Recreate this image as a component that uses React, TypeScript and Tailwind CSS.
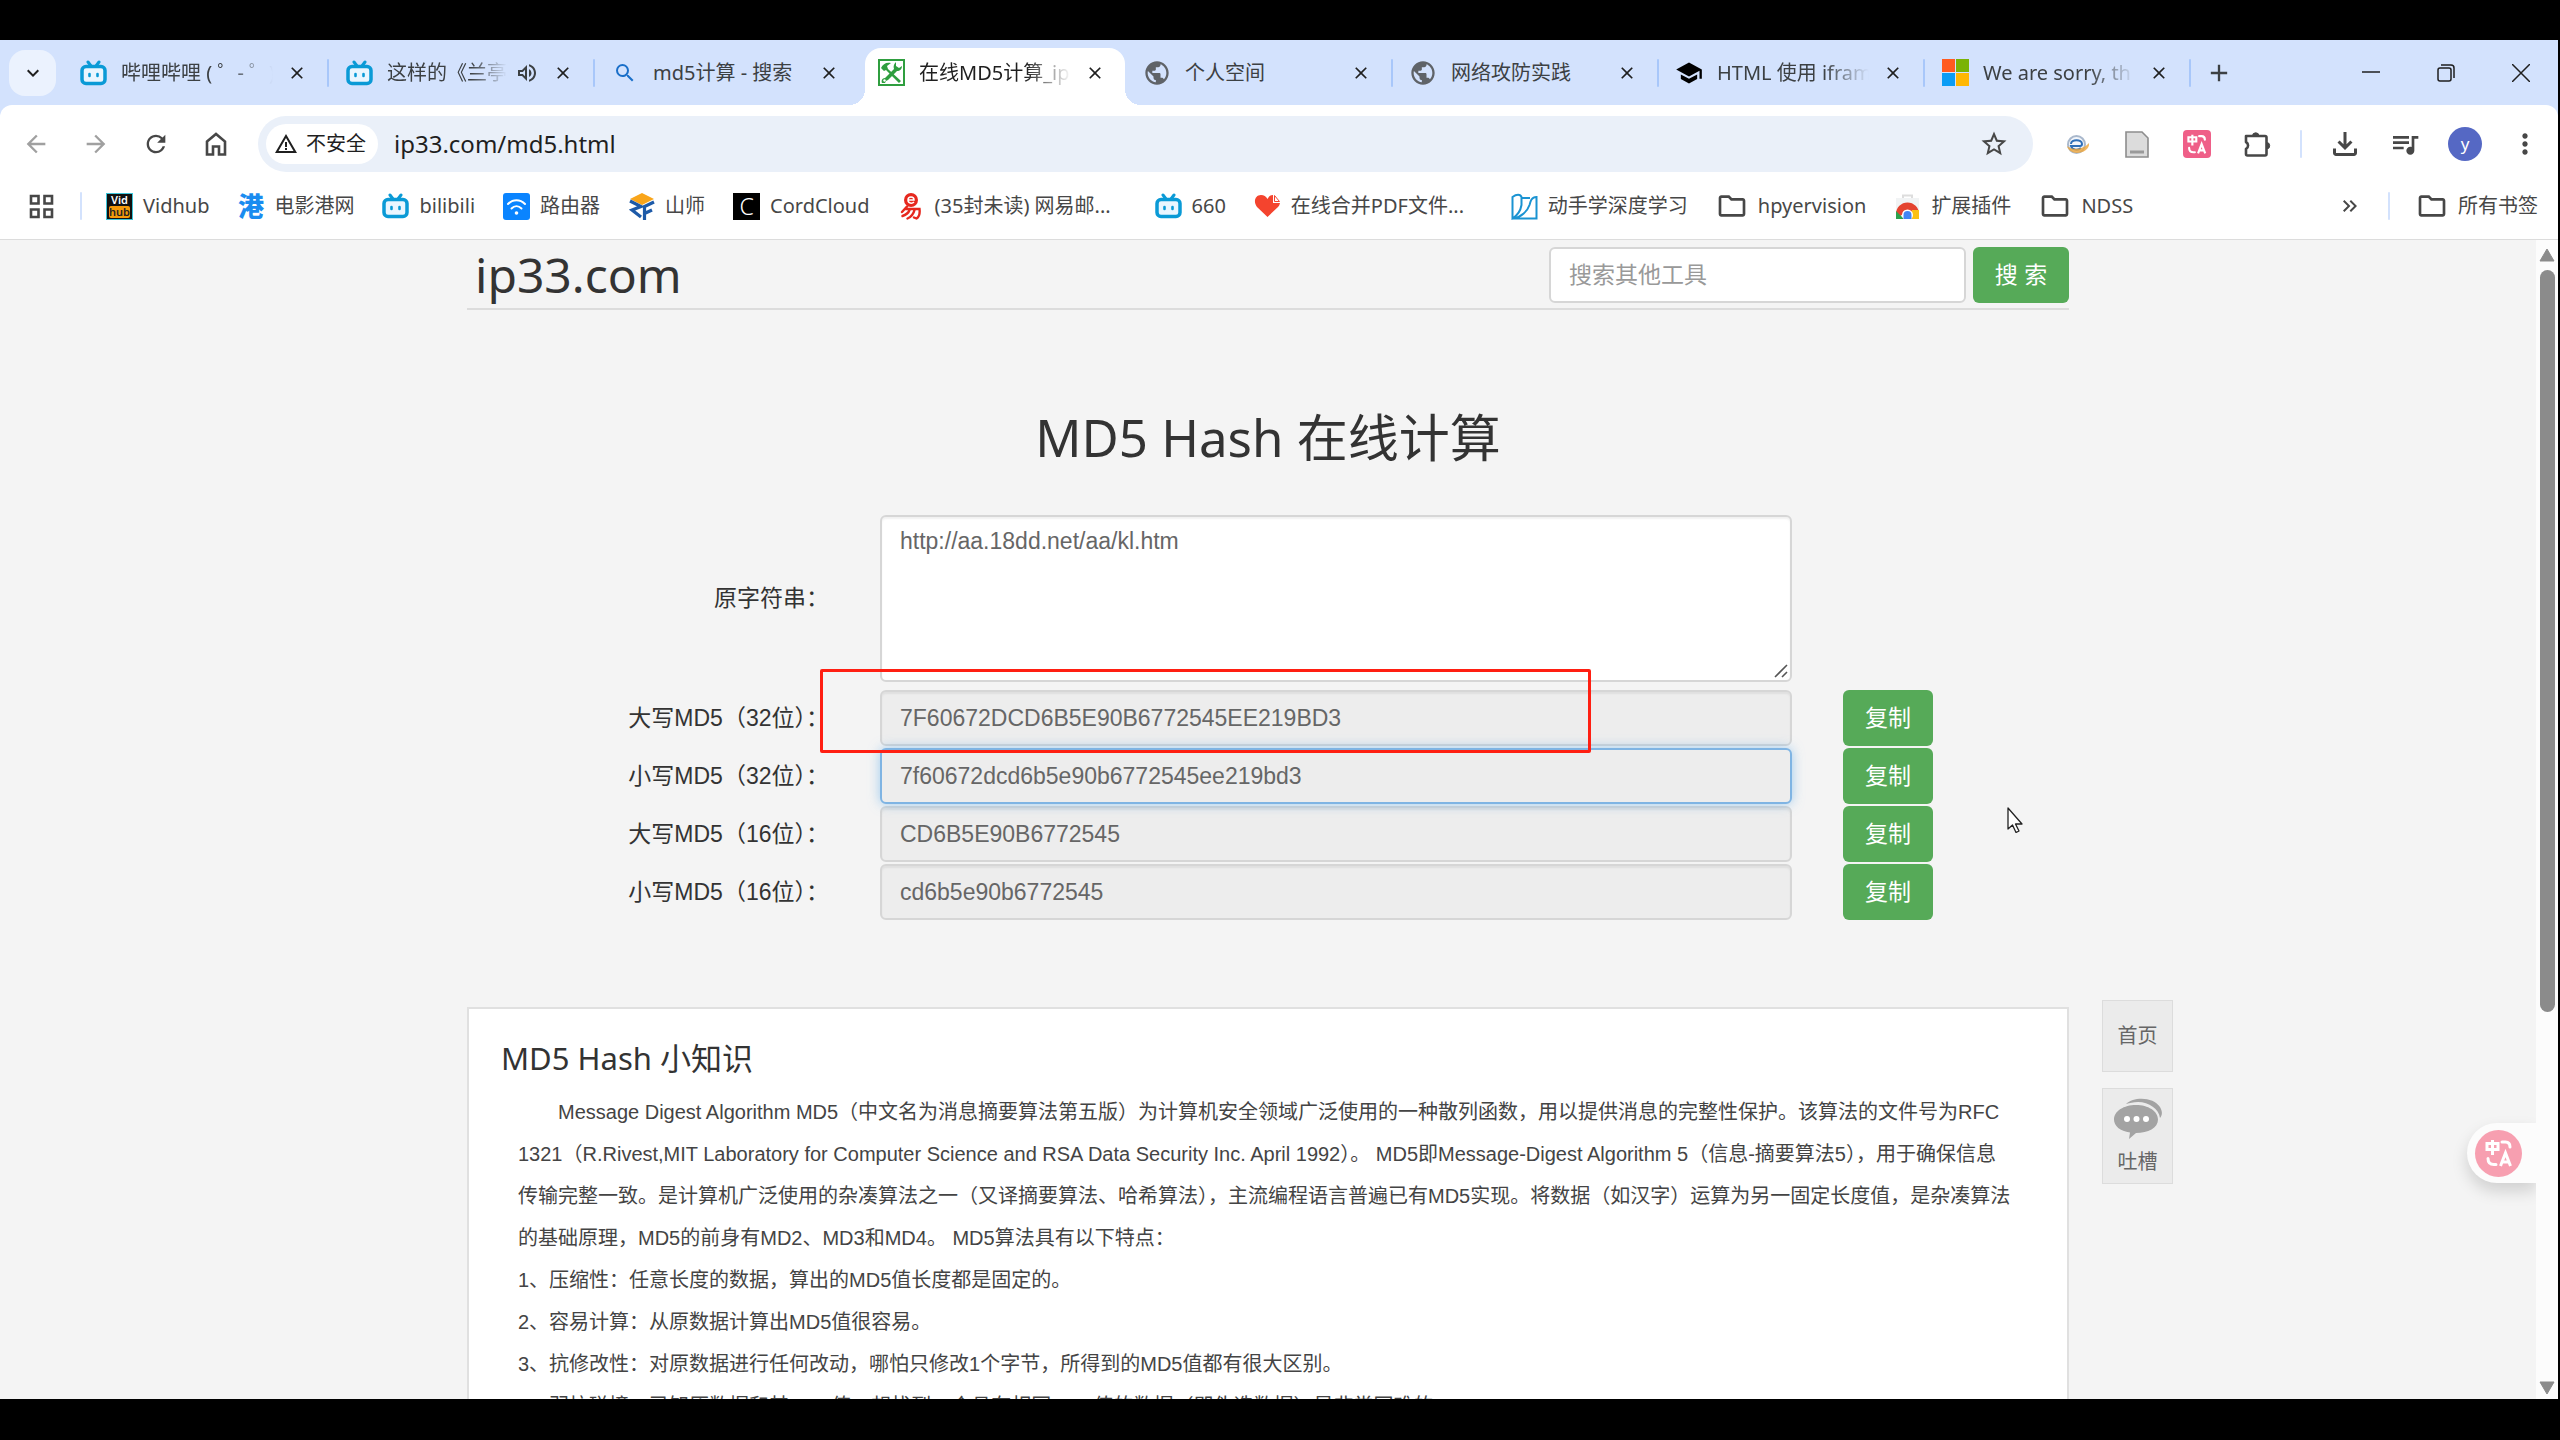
import React, { ReactNode, useState } from "react";
import clsx from "clsx";
import {
  MdArrowBack,
  MdArrowForward,
  MdRefresh,
  MdWarningAmber,
  MdStarBorder,
  MdOutlineFileDownload,
  MdQueueMusic,
  MdMoreVert,
  MdPublic,
  MdClose,
  MdAdd,
  MdSearch,
  MdKeyboardArrowDown,
  MdOutlineVolumeUp,
  MdSchool,
  MdOutlineFolder,
  MdKeyboardDoubleArrowRight,
} from "react-icons/md";

function BiliIcon() {
  return (
    <svg viewBox="0 0 27 26" className="h-[26px] w-[27px]">
      <path d="M8 2l3 4M19 2l-3 4" stroke="#0a9ad6" strokeWidth="3" strokeLinecap="round" />
      <rect x="2" y="6.5" width="23" height="17" rx="4" fill="#eaf6ff" stroke="#0a9ad6" strokeWidth="3.500" />
      <path d="M9.5 14v2M17.500 14v2" stroke="#0a9ad6" strokeWidth="2.600" strokeLinecap="round" />
    </svg>
  );
}

function ToolsIcon() {
  return (
    <svg viewBox="0 0 27 27" className="size-[27px]">
      <rect x="1" y="1" width="25" height="25" fill="#fff" stroke="#2f9e3f" strokeWidth="2" />
      <path d="M3 9c2-4 5-6 10-5l-4 3 1 3 13 12-2 2L8 11l-2 1z" fill="#2f9e3f" />
      <path d="M18 3c-2 2-3 4-2 7L7 19c-3 0-4 3-3 5h3l1-2 2-1 9-9c3 0 5-2 5-5l-3 2-3-2z" fill="#2f9e3f" />
      <circle cx="6.500" cy="21.500" r="1.200" fill="#fff" />
    </svg>
  );
}

function MicrosoftIcon() {
  return (
    <svg viewBox="0 0 27 27" className="size-[27px]">
      <path fill="#ff5a1f" d="M0 0h13v13H0z" />
      <path fill="#7ab305" d="M14 0h13v13H14z" />
      <path fill="#0a9cf5" d="M0 14h13v13H0z" />
      <path fill="#ffb703" d="M14 14h13v13H14z" />
    </svg>
  );
}

function VidhubIcon() {
  return (
    <span className="flex size-[27px] flex-col border border-[#3cc4d8] bg-[#111] px-0.5 text-center text-[11px] leading-[12px] font-semibold text-white">
      <span>Vid</span>
      <span className="rounded-xs bg-[#f59a0a] text-[#222]">hub</span>
    </span>
  );
}

function WifiIcon() {
  return (
    <svg viewBox="0 0 27 27" className="size-[27px]">
      <rect width="27" height="27" rx="3" fill="#0a84ff" />
      <g fill="none" stroke="#fff" strokeWidth="2" strokeLinecap="round">
        <path d="M5 11c5-5 12-5 17 0" />
        <path d="M8.500 15.500c3-3 7-3 10 0" />
      </g>
      <circle cx="13.500" cy="20" r="1.800" fill="#fff" />
    </svg>
  );
}

function ShanshiIcon() {
  return (
    <svg viewBox="0 0 26 27" className="h-[27px] w-[26px]">
      <path d="M13 0l12 6-12 6L1 6z" fill="#f9a51a" />
      <path d="M1 8l11 5.500-9 3.500 9 7" fill="none" stroke="#1d5aa8" strokeWidth="3.200" />
      <path d="M25 9l-9.500 4.500V27M15.500 20.500L23 17" fill="none" stroke="#1d5aa8" strokeWidth="3.200" />
    </svg>
  );
}

function MailIcon() {
  return (
    <svg viewBox="0 0 22 27" className="h-[27px] w-[22px]">
      <circle cx="11" cy="7" r="7" fill="#e6281e" />
      <path d="M8 7h6c0-4-6-4-6 0 0 3.500 4 4 6 2" fill="none" stroke="#fff" strokeWidth="1.500" />
      <path
        d="M7 13.500L2 19M5 16h14.500c.5 4-.5 8-3 9.500l-2.500-1M9.500 17c-1 3-4 5-7 6M14.500 17c-1 4-3.500 7-7 8.500"
        fill="none"
        stroke="#e6281e"
        strokeWidth="2.400"
        strokeLinecap="round"
      />
    </svg>
  );
}

function HeartIcon() {
  return (
    <svg viewBox="0 0 27 24" className="h-6 w-[27px]">
      <path d="M13.500 23L3 13C-1 8 1 1 7 1c3 0 5 1.500 6.500 4C15 2.500 16 1 19 1v8h7c-.5 2-1 3-2 4z" fill="#f4442e" />
      <path d="M20.500 1.500L25.500 7.500h-5z" fill="#fff" stroke="#f4442e" />
    </svg>
  );
}

function BookIcon() {
  return (
    <svg viewBox="0 0 27 27" className="size-[27px]" fill="none" stroke="#1a93d2" strokeWidth="2">
      <path d="M1.500 4c4-3 8-3 9 0v8c-1 6-5 11-9 13.500z" />
      <path d="M2 25.500h23.500V4c-5 0-6 4-7 8-2 6-8 12-16.500 13.500zM11 5h8" />
    </svg>
  );
}

function WebStoreIcon() {
  return (
    <svg viewBox="0 0 27 27" className="size-[27px]">
      <path d="M9 5V2.500h9V5" fill="none" stroke="#ddd" strokeWidth="2" />
      <path d="M2 5h23v21H2z" fill="#f1f3f4" />
      <path d="M2 26v-5a11.500 11.500 0 0 1 23 0h-8a4 4 0 0 0-8 0z" fill="#e4432f" />
      <path d="M2 18l8 8H2z" fill="#2ba24c" />
      <path d="M18 17h7v9h-9z" fill="#fbc116" />
      <circle cx="13.500" cy="22" r="5.500" fill="#fff" />
      <path d="M9.500 26v-4a4 4 0 0 1 8 0v4z" fill="#4285f4" />
    </svg>
  );
}

function HomeIcon() {
  return (
    <svg viewBox="0 0 24 26" className="h-[26px] w-6" fill="none" stroke="currentColor" strokeWidth="2.600">
      <path d="M3 10.500L12 3l9 7.500V23.500h-6v-8H9v8H3z" />
    </svg>
  );
}

function PuzzleIcon() {
  return (
    <svg viewBox="0 0 28 28" className="size-7">
      <path
        d="M3 6h19a1.500 1.500 0 0 1 1.500 1.500V24a1.500 1.500 0 0 1-1.500 1.500H4.500A1.500 1.500 0 0 1 3 24v-5a4 4 0 0 0 0-7z"
        fill="none"
        stroke="#474747"
        strokeWidth="2.600"
        strokeLinejoin="round"
      />
      <path d="M9.500 6a3.200 3.200 0 0 1 6.400 0zM23.500 12.500a3.200 3.200 0 0 1 0 6.400z" fill="#474747" stroke="#474747" />
    </svg>
  );
}

function PlanetIcon() {
  return (
    <svg viewBox="0 0 27 27" className="size-[27px]" fill="none">
      <circle cx="12.500" cy="13.500" r="8.500" fill="#f3f6fb" stroke="#a9b8cc" strokeWidth="2" />
      <path d="M7 13c0-5 11-5 11 0 0 1-1 2-2 2H7c1 4 7 5 10 2" stroke="#2e6fb8" strokeWidth="2" />
      <path d="M3 15c6 5 17 3 22-3 1 6-6 10-12 10-5 0-9-3-10-7z" fill="#f0a63a" opacity="0.800" />
    </svg>
  );
}

function NoteIcon() {
  return (
    <svg viewBox="0 0 24 27" className="h-[27px] w-6">
      <path d="M1 1h16l6 6v19H1z" fill="#dcdcdc" stroke="#8d8d8d" strokeWidth="1.600" />
      <path d="M5 19.500h14v3H5z" fill="#9a9a9a" />
    </svg>
  );
}

// the "中 / A" mark shared by the toolbar extension and the floating button
function TranslateMark({ className }: { className?: string }) {
  return (
    <svg viewBox="0 0 28 28" className={className} fill="none" stroke="#fff" strokeWidth="3">
      <path d="M2 4.500h11v6H2zM7.500 1v15" />
      <path d="M17 3h3.500c3 0 4.500 1.500 4.500 5" strokeLinecap="round" />
      <path d="M3 19.500c0 4 2 6 6 6h2" strokeLinecap="round" />
      <path d="M15.500 27l5-13 5 13M17.500 23h6.500" />
    </svg>
  );
}

function ChatIcon() {
  return (
    <svg viewBox="0 0 48 42" className="h-[42px] w-12">
      <path d="M12 6C20-2 40-1 46 9c3 5 2 9 0 11-1-9-11-16-22-16-5 0-8 1-12 2z" fill="#a3a3a3" />
      <path d="M22 7c12 0 22 6 22 14.500S34 35 22 35l-7 6 1-6.500C6 33 0 28 0 21.500 0 13 10 7 22 7z" fill="#a3a3a3" />
      <g fill="#fff">
        <circle cx="13" cy="21" r="3" />
        <circle cx="22.500" cy="21" r="3" />
        <circle cx="32" cy="21" r="3" />
      </g>
    </svg>
  );
}

type Tab = {
  title: string;
  icon: ReactNode;
  active?: boolean;
  fade?: boolean;
  audio?: boolean;
};

const tabs: Tab[] = [
  { title: "哔哩哔哩 ( ゜- ゜)", icon: <BiliIcon />, fade: true },
  { title: "这样的《兰亭", icon: <BiliIcon />, fade: true, audio: true },
  { title: "md5计算 - 搜索", icon: <MdSearch className="size-6 text-[#1a6fc9]" /> },
  { title: "在线MD5计算_ip", icon: <ToolsIcon />, active: true, fade: true },
  { title: "个人空间", icon: <MdPublic className="size-7 text-[#5f6368]" /> },
  { title: "网络攻防实践", icon: <MdPublic className="size-7 text-[#5f6368]" /> },
  { title: "HTML 使用 ifram", icon: <MdSchool className="size-7 text-black" />, fade: true },
  { title: "We are sorry, th", icon: <MicrosoftIcon />, fade: true },
];

const folder = <MdOutlineFolder className="size-8 text-[#474747]" />;

const bookmarks: { title: string; icon: ReactNode; long?: boolean }[] = [
  { title: "Vidhub", icon: <VidhubIcon /> },
  {
    title: "电影港网",
    icon: <span className="text-[26px] leading-none font-black text-[#1a8cf0]">港</span>,
  },
  { title: "bilibili", icon: <BiliIcon /> },
  { title: "路由器", icon: <WifiIcon /> },
  { title: "山师", icon: <ShanshiIcon /> },
  {
    title: "CordCloud",
    icon: <span className="size-[27px] bg-black text-center text-[23px] leading-[27px] font-light text-white">C</span>,
  },
  { title: "(35封未读) 网易邮...", icon: <MailIcon />, long: true },
  { title: "660", icon: <BiliIcon /> },
  { title: "在线合并PDF文件...", icon: <HeartIcon />, long: true },
  { title: "动手学深度学习", icon: <BookIcon /> },
  { title: "hpyervision", icon: folder },
  { title: "扩展插件", icon: <WebStoreIcon /> },
  { title: "NDSS", icon: folder },
];

function TabItem({ tab, divider }: { tab: Tab; divider: boolean }) {
  return (
    <div
      role="tab"
      aria-selected={!!tab.active}
      className="relative flex h-full w-[266px] min-w-0 items-center pr-5 pl-4"
    >
      {tab.active && (
        <div className="absolute top-2 right-0.5 bottom-0 left-1 rounded-t-2xl bg-white">
          <div className="absolute bottom-0 -left-4 size-4 bg-[radial-gradient(circle_at_0_0,transparent_16px,white_16px)]" />
          <div className="absolute -right-4 bottom-0 size-4 bg-[radial-gradient(circle_at_100%_0,transparent_16px,white_16px)]" />
        </div>
      )}
      <span className="relative flex w-7 shrink-0 items-center justify-center">{tab.icon}</span>
      <span
        className={clsx(
          "relative ml-[14px] min-w-0 flex-1 overflow-hidden text-[20px] whitespace-nowrap",
          tab.active ? "text-[#1f1f1f]" : "text-[#3c4043]",
          tab.fade && "[mask-image:linear-gradient(to_right,black_70%,transparent)]"
        )}
      >
        {tab.title}
      </span>
      {tab.audio && <MdOutlineVolumeUp className="relative ml-2 size-6 shrink-0 text-[#3c4043]" />}
      <button aria-label="关闭标签页" className="relative ml-3 flex size-6 shrink-0 items-center justify-center">
        <MdClose className="size-5 text-[#1f1f1f]" />
      </button>
      {divider && <span className="absolute right-0 h-7 w-0.5 rounded bg-[#a8c7fa]" />}
    </div>
  );
}

function TabStrip() {
  return (
    <div className="flex h-[65px] items-center bg-[#d3e2fd] pl-[9px]">
      <button
        aria-label="搜索标签页"
        className="mr-[7px] flex h-[46px] w-[47px] shrink-0 items-center justify-center rounded-2xl bg-[#ebf2fe]"
      >
        <MdKeyboardArrowDown className="size-6 text-[#1f1f1f]" />
      </button>
      <div role="tablist" className="flex h-full min-w-0">
        {tabs.map((tab, i) => (
          <TabItem key={tab.title} tab={tab} divider={!tab.active && !tabs[i + 1]?.active} />
        ))}
      </div>
      <button aria-label="新标签页" className="ml-[14px] shrink-0">
        <MdAdd className="size-7 text-[#3c4043]" />
      </button>
      <div className="ml-auto flex shrink-0 items-center text-[#1f1f1f]">
        <button aria-label="最小化" className="flex w-[75px] justify-center">
          <svg viewBox="0 0 18 18" className="size-[18px]" stroke="currentColor" strokeWidth="1.500">
            <path d="M0 8h18" />
          </svg>
        </button>
        <button aria-label="还原" className="flex w-[75px] justify-center">
          <svg viewBox="0 0 18 18" className="size-[18px]" fill="none" stroke="currentColor" strokeWidth="1.500">
            <rect x="1" y="4" width="13" height="13" rx="2" />
            <path d="M4 1h10a3 3 0 0 1 3 3v10" />
          </svg>
        </button>
        <button aria-label="关闭" className="flex w-[75px] justify-center">
          <svg viewBox="0 0 18 18" className="size-[18px]" stroke="currentColor" strokeWidth="1.500">
            <path d="M0 0l18 18M18 0L0 18" />
          </svg>
        </button>
      </div>
    </div>
  );
}

function ToolButton({ label, children }: { label: string; children: ReactNode }) {
  return (
    <button aria-label={label} className="flex w-[60px] shrink-0 items-center justify-center">
      {children}
    </button>
  );
}

function Toolbar() {
  return (
    <div className="flex h-[78px] items-center bg-[#d3e2fd]">
      <div className="flex h-full min-w-0 flex-1 items-center rounded-t-xl bg-white pr-[3px] pl-[6px] text-[#474747]">
        <ToolButton label="后退">
          <MdArrowBack className="size-7 text-[#a0a0a0]" />
        </ToolButton>
        <ToolButton label="前进">
          <MdArrowForward className="size-7 text-[#a0a0a0]" />
        </ToolButton>
        <ToolButton label="重新加载">
          <MdRefresh className="size-7" />
        </ToolButton>
        <ToolButton label="主页">
          <HomeIcon />
        </ToolButton>
        <div className="ml-3 flex h-14 min-w-0 flex-1 items-center rounded-full bg-[#eaf0f9] px-2">
          <button className="flex h-10 shrink-0 items-center gap-2 rounded-full bg-white px-2 pr-3 text-[20px] text-[#1f1f1f]">
            <MdWarningAmber className="size-6" />
            不安全
          </button>
          <input
            type="text"
            aria-label="地址"
            defaultValue="ip33.com/md5.html"
            className="ml-4 min-w-0 flex-1 bg-transparent text-[24px] text-[#1f1f1f] outline-none"
          />
          <button aria-label="收藏" className="mr-4">
            <MdStarBorder className="size-[30px]" />
          </button>
        </div>
        <div className="ml-[14px] flex items-center">
          <ToolButton label="下载器">
            <PlanetIcon />
          </ToolButton>
          <ToolButton label="便签">
            <NoteIcon />
          </ToolButton>
          <ToolButton label="翻译">
            <span className="flex size-7 items-center justify-center rounded bg-[#ef5f88]">
              <TranslateMark className="size-5" />
            </span>
          </ToolButton>
          <ToolButton label="扩展程序">
            <PuzzleIcon />
          </ToolButton>
          <span className="mx-[13px] h-7 w-0.5 rounded bg-[#d3e2fd]" />
          <ToolButton label="下载">
            <MdOutlineFileDownload className="size-9" />
          </ToolButton>
          <ToolButton label="媒体">
            <MdQueueMusic className="size-8" />
          </ToolButton>
          <ToolButton label="用户">
            <span className="flex size-[34px] items-center justify-center rounded-full bg-[#5568c4] text-[17px] text-white">
              y
            </span>
          </ToolButton>
          <ToolButton label="菜单">
            <MdMoreVert className="size-8" />
          </ToolButton>
        </div>
      </div>
    </div>
  );
}

function BookmarkBar() {
  return (
    <div className="border-b border-[#dcdcdc] bg-white pb-[10px] text-[20px] text-[#474747]">
      <div className="flex h-[46px] items-center pr-5 pl-[29px] whitespace-nowrap">
        <button aria-label="应用">
          <svg viewBox="0 0 25 25" className="size-[25px]" fill="none" stroke="currentColor" strokeWidth="2.600">
            <path d="M2 2h7.500v7.500H2zM15.500 2H23v7.500h-7.500zM2 15.500h7.500V23H2zM15.500 15.500H23V23h-7.500z" />
          </svg>
        </button>
        <span className="mr-6 ml-[26px] h-7 w-0.5 rounded bg-[#d3e2fd]" />
        <nav className="flex items-center gap-7">
          {bookmarks.map((b) => (
            <a key={b.title} href="#" className="flex items-center gap-[10px]">
              <span className="flex min-w-[27px] shrink-0 items-center justify-center">{b.icon}</span>
              <span className={clsx(b.long && "w-48")}>{b.title}</span>
            </a>
          ))}
        </nav>
        <button aria-label="更多书签" className="ml-auto">
          <MdKeyboardDoubleArrowRight className="size-6" />
        </button>
        <span className="mx-[26px] h-7 w-0.5 rounded bg-[#d3e2fd]" />
        <a href="#" className="flex items-center gap-[10px]">
          {folder}
          所有书签
        </a>
      </div>
    </div>
  );
}

const field = "w-full rounded-md border-2 px-[18px] text-[23px] text-[#666] outline-none";
const idle = "border-[#d6d6d6] shadow-[inset_0_2px_2px_rgba(0,0,0,0.06)]";
const glowing = "relative border-[#7fb4e3] shadow-[0_0_12px_rgba(102,175,233,0.6)]";

const hashes = [
  { id: "upper32", label: "大写MD5（32位）：", value: "7F60672DCD6B5E90B6772545EE219BD3" },
  { id: "lower32", label: "小写MD5（32位）：", value: "7f60672dcd6b5e90b6772545ee219bd3", focused: true },
  { id: "upper16", label: "大写MD5（16位）：", value: "CD6B5E90B6772545" },
  { id: "lower16", label: "小写MD5（16位）：", value: "cd6b5e90b6772545" },
];

function HashForm() {
  const [text, setText] = useState("http://aa.18dd.net/aa/kl.htm");

  return (
    <form className="relative grid grid-cols-[362fr_912fr_226fr] items-center gap-x-[51px] gap-y-0.5 text-[23px]">
      <label htmlFor="source" className="mb-1.5 text-right">
        原字符串：
      </label>
      <div className="relative mb-1.5 flex">
        <textarea
          id="source"
          value={text}
          onChange={(e) => setText(e.target.value)}
          className={clsx(field, idle, "h-[167px] resize-none bg-white py-2 leading-8")}
        />
        <svg viewBox="0 0 14 14" className="absolute right-1 bottom-1 size-[14px]" stroke="#555" strokeWidth="1.600">
          <path d="M1 13L13 1M8 13l5-5" />
        </svg>
      </div>
      <span />
      {hashes.map((h) => (
        <React.Fragment key={h.id}>
          <label htmlFor={h.id} className="text-right whitespace-nowrap">
            {h.label}
          </label>
          <input
            id={h.id}
            readOnly
            value={h.value}
            className={clsx(field, "h-14 bg-[#ededed]", h.focused ? glowing : idle)}
          />
          <button type="button" className="h-14 w-[90px] rounded-md bg-[#56aa58] text-white">
            复制
          </button>
        </React.Fragment>
      ))}
      <div className="pointer-events-none absolute top-[154px] left-[353px] h-[84px] w-[771px] rounded-xs border-3 border-[#ff1f12]" />
    </form>
  );
}

const features = [
  "1、压缩性：任意长度的数据，算出的MD5值长度都是固定的。",
  "2、容易计算：从原数据计算出MD5值很容易。",
  "3、抗修改性：对原数据进行任何改动，哪怕只修改1个字节，所得到的MD5值都有很大区别。",
  "4、弱抗碰撞：已知原数据和其MD5值，想找到一个具有相同MD5值的数据（即伪造数据）是非常困难的。",
];

function Knowledge() {
  return (
    <section className="mt-[87px] border-2 border-[#e0e0e0] bg-white px-8 pt-7 pb-10">
      <h2 className="font-['Noto_Sans','Noto_Sans_CJK_SC',sans-serif] text-[31px] leading-[42px]">
        MD5 Hash 小知识
      </h2>
      <div className="mt-3 pr-[21px] pl-[17px] text-[20px] leading-[42px] text-[#444]">
        <p className="indent-10">
          Message Digest Algorithm MD5（中文名为消息摘要算法第五版）为计算机安全领域广泛使用的一种散列函数，用以提供消息的完整性保护。该算法的文件号为RFC
          1321（R.Rivest,MIT Laboratory for Computer Science and RSA Data Security Inc. April 1992）。
          MD5即Message-Digest Algorithm
          5（信息-摘要算法5），用于确保信息传输完整一致。是计算机广泛使用的杂凑算法之一（又译摘要算法、哈希算法），主流编程语言普遍已有MD5实现。将数据（如汉字）运算为另一固定长度值，是杂凑算法的基础原理，MD5的前身有MD2、MD3和MD4。
          MD5算法具有以下特点：
        </p>
        {features.map((f) => (
          <p key={f}>{f}</p>
        ))}
      </div>
    </section>
  );
}

function SideLinks() {
  return (
    <aside className="absolute top-[760px] left-1/2 ml-[834px] flex w-[71px] flex-col gap-4 text-center text-[20px] text-[#666]">
      <a href="#" className="flex h-[72px] items-center justify-center border border-[#dcdcdc] bg-[#ebebeb]">
        首页
      </a>
      <a href="#" className="flex h-24 flex-col items-center border border-[#dcdcdc] bg-[#ebebeb] pt-[9px]">
        <ChatIcon />
        <span className="mt-1.5 leading-8">吐槽</span>
      </a>
    </aside>
  );
}

function Scrollbar() {
  return (
    <div className="flex w-[22px] shrink-0 flex-col items-center bg-[#fcfcfc] pt-2 pb-1">
      <svg viewBox="0 0 16 14" className="h-[14px] w-4 shrink-0" fill="#8b8b8b">
        <path d="M8 1l7 12H1z" stroke="#8b8b8b" strokeLinejoin="round" />
      </svg>
      <div className="mt-2 h-[742px] w-[15px] rounded-full bg-[#8b8b8b]" />
      <svg viewBox="0 0 16 14" className="mt-auto h-[14px] w-4 shrink-0" fill="#8b8b8b">
        <path d="M8 13l7-12H1z" stroke="#8b8b8b" strokeLinejoin="round" />
      </svg>
    </div>
  );
}

export default function App() {
  return (
    <div className="flex h-screen flex-col overflow-hidden bg-black pt-10 pr-0.5 pb-[41px] font-['Noto_Sans','Noto_Sans_CJK_SC',sans-serif]">
      <TabStrip />
      <Toolbar />
      <BookmarkBar />
      <div className="flex min-h-0 flex-1">
        <main className="relative min-w-0 flex-1 overflow-hidden bg-[#f4f4f4] font-['Liberation_Sans','Noto_Sans_CJK_SC',sans-serif] text-[#333]">
          <div className="mx-auto w-full max-w-[1602px]">
            <header className="flex items-center border-b-2 border-[#dcdcdc] pt-[7px] pb-[5px]">
              <a
                href="#"
                className="pl-2 font-['Noto_Sans','Noto_Sans_CJK_SC',sans-serif] text-[48px] leading-14"
              >
                ip33.com
              </a>
              <form className="ml-auto flex gap-[7px]">
                <input
                  type="search"
                  aria-label="搜索其他工具"
                  placeholder="搜索其他工具"
                  className="h-14 w-[417px] rounded-md border-2 border-[#d6d6d6] bg-white px-[18px] text-[23px] outline-none placeholder:text-[#999]"
                />
                <button type="button" className="h-14 w-24 rounded-md bg-[#56aa58] text-[23px] text-white">
                  搜 索
                </button>
              </form>
            </header>
            <h1 className="mt-[91px] mb-[42px] text-center font-['Noto_Sans','Noto_Sans_CJK_SC',sans-serif] text-[51px] leading-[72px]">
              MD5 Hash 在线计算
            </h1>
            <HashForm />
            <Knowledge />
          </div>
          <SideLinks />
          <button
            aria-label="翻译网页"
            className="absolute top-[883px] right-0 flex h-15 w-[69px] items-center rounded-l-full bg-[#fcfcfc] pl-2 shadow-[0_8px_16px_rgba(0,0,0,0.15)]"
          >
            <span className="flex size-[47px] items-center justify-center rounded-full bg-[#f79fb0]">
              <TranslateMark className="size-7" />
            </span>
          </button>
          <svg viewBox="0 0 16 26" className="absolute top-[567px] left-1/2 ml-[739px] h-[26px] w-4">
            <path
              d="M1 1v21l4.500-4 3.500 7.500 3-1.500-3.500-7H15z"
              fill="#fff"
              stroke="#222"
              strokeWidth="1.300"
              strokeLinejoin="round"
            />
          </svg>
        </main>
        <Scrollbar />
      </div>
    </div>
  );
}
